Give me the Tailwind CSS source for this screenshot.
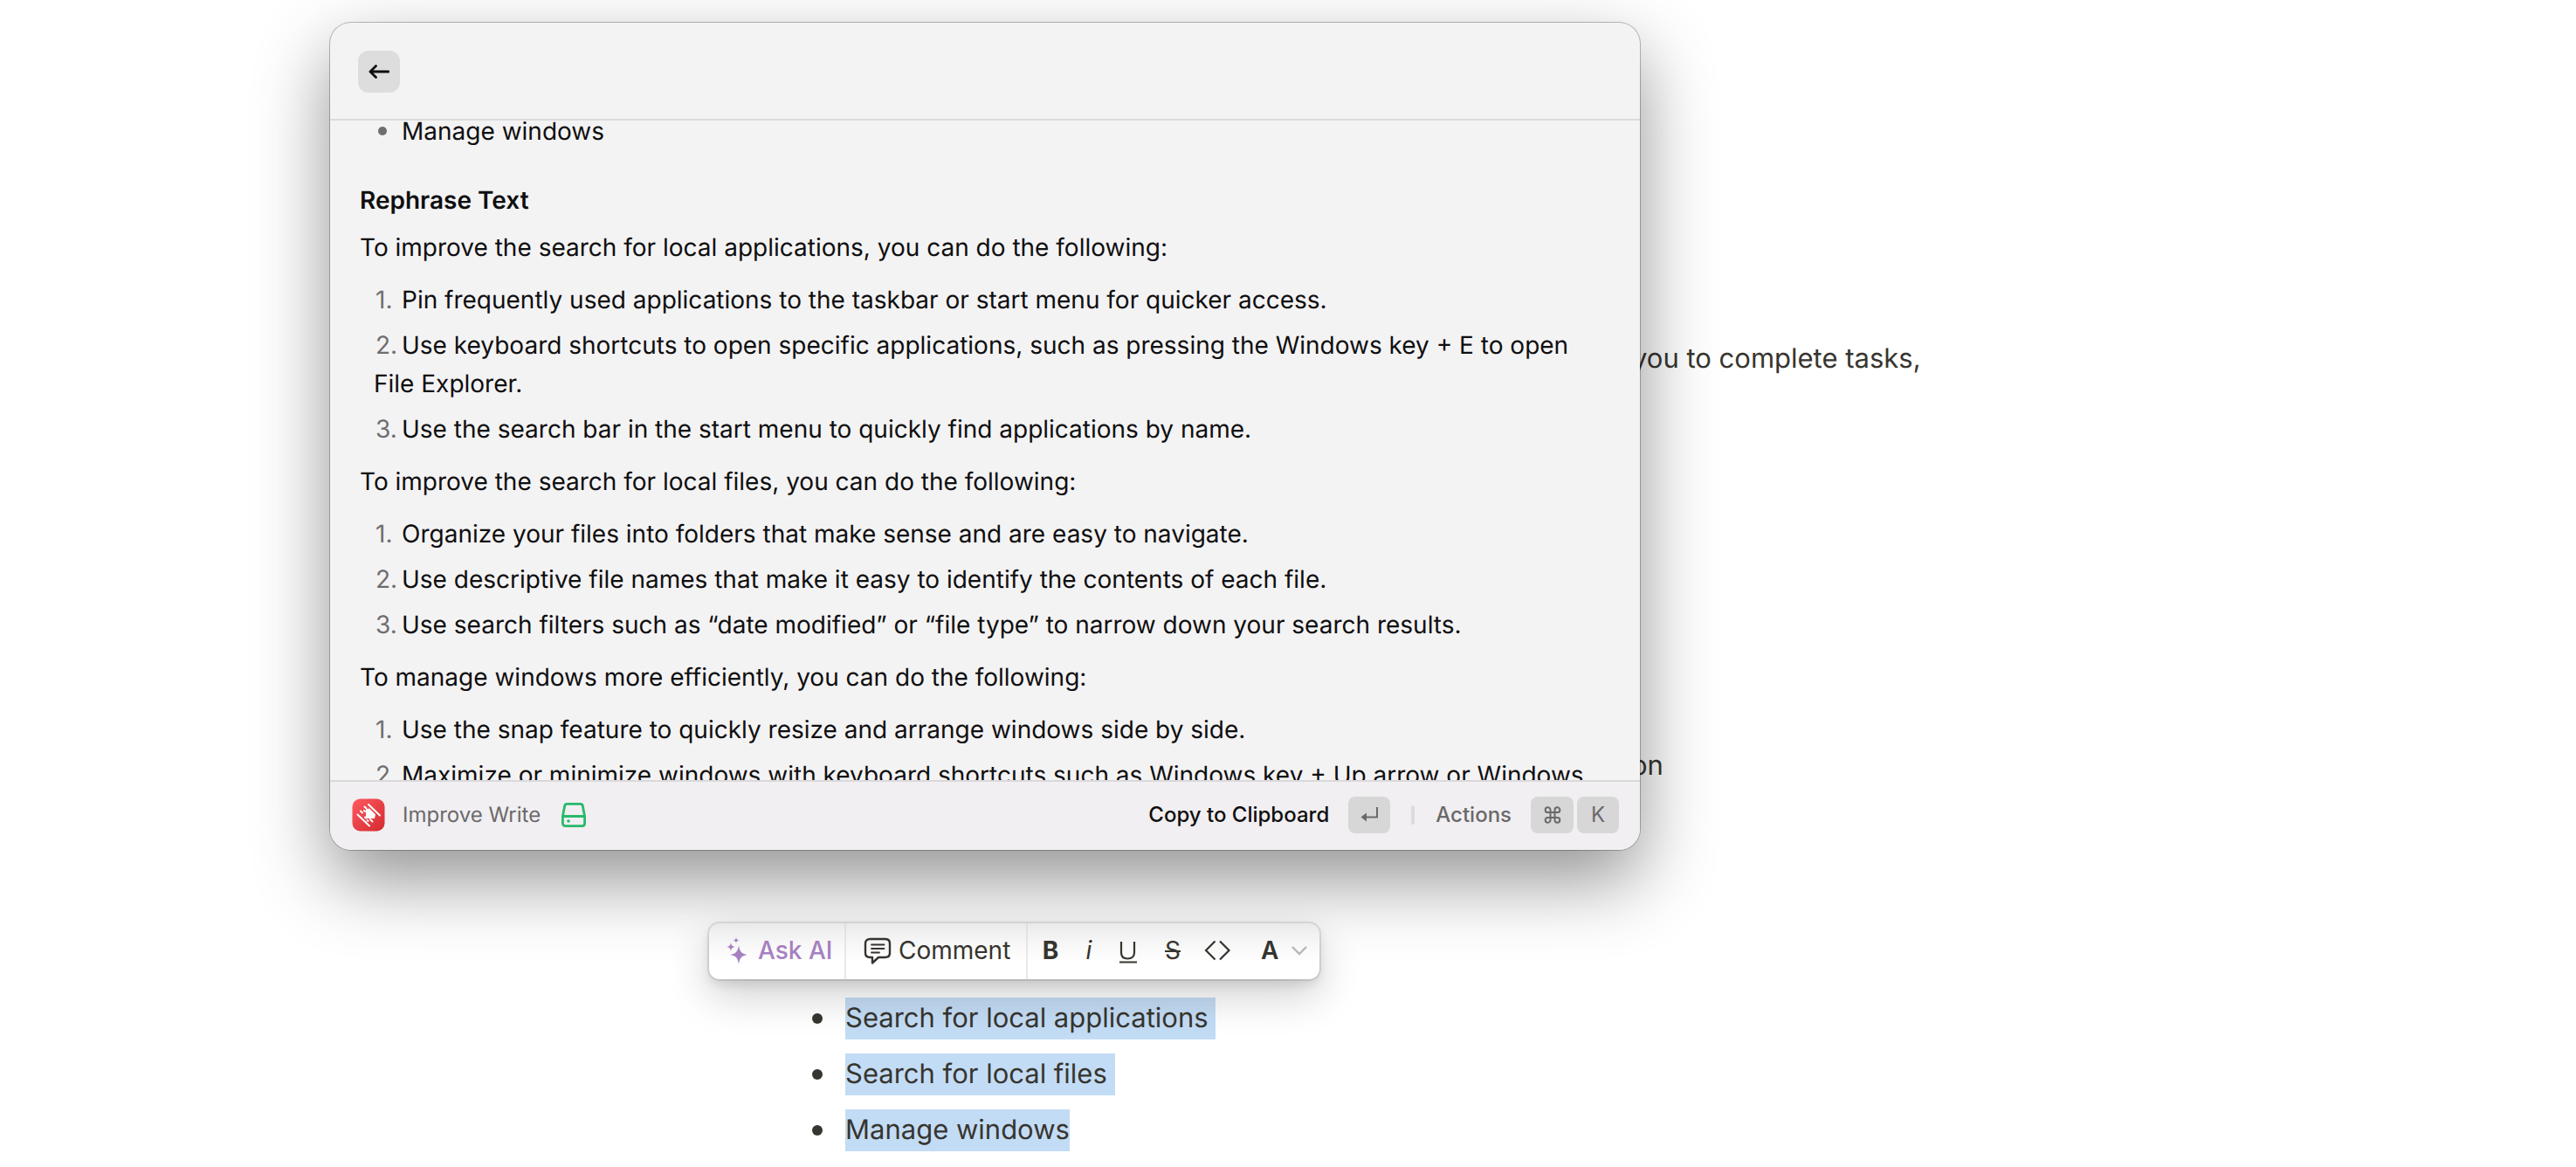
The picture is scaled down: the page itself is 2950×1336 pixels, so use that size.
<!DOCTYPE html>
<html lang="en">
<head>
<meta charset="utf-8">
<title>Improve Write</title>
<script src="https://cdn.jsdelivr.net/npm/@tailwindcss/browser@4"></script>
</head>
<body class="relative min-h-screen overflow-hidden bg-white font-[Inter,sans-serif] text-[#37352f] antialiased [text-rendering:geometricPrecision]">

<!-- Document -->
<main class="flex flex-col pt-[387px] text-[31px] leading-[48px]">
  <p class="pl-[1869px]">you to complete tasks,</p>
  <p class="mt-[418px] pl-[1868px]">on</p>
  <ul class="mt-[241px] flex flex-col gap-4 pl-[930px]">
    <li class="flex items-center gap-[26px]"><span class="size-3 rounded-full bg-[#37352f]"></span><span class="whitespace-pre bg-[#c3dcf5]">Search for local applications </span></li>
    <li class="flex items-center gap-[26px]"><span class="size-3 rounded-full bg-[#37352f]"></span><span class="whitespace-pre bg-[#c3dcf5]">Search for local files </span></li>
    <li class="flex items-center gap-[26px]"><span class="size-3 rounded-full bg-[#37352f]"></span><span class="bg-[#c3dcf5]">Manage windows</span></li>
  </ul>
</main>

<!-- Selection toolbar -->
<div role="toolbar" aria-label="Text formatting" class="absolute left-[812px] top-[1057px] flex h-16 items-stretch rounded-xl bg-white bg-linear-to-b from-[#f5f5f5] to-white to-70% text-[28px] shadow-[0_0_0_2px_rgba(15,15,15,0.09),0_6px_12px_rgba(15,15,15,0.1),0_18px_48px_rgba(15,15,15,0.2)]">
  <button class="flex w-[157px] items-center gap-3 border-r-2 border-[#e9e9e7] pb-0.5 pl-5 font-medium text-[#a782c3]">
    <svg class="h-8 w-6" viewBox="0 0 24 32" fill="currentColor"><path d="M14 10c1 7 3 10 10 11-7 1-9 4-10 11-1-7-3-10-10-11 7-1 9-4 10-11zM5 7c.6 3.400 1.500 4.400 5 5-3.500.6-4.400 1.600-5 5-.6-3.400-1.500-4.400-5-5 3.500-.6 4.400-1.600 5-5zM11 1c.4 2.300 1 3 3.500 3.500C12 5 11.400 5.700 11 8c-.4-2.300-1-3-3.500-3.500C10 4 10.600 3.300 11 1z"/></svg>
    Ask AI
  </button>
  <button class="flex w-[208px] items-center gap-2 border-r-2 border-[#e9e9e7] pb-0.5 pl-5">
    <svg class="h-8 w-8" viewBox="0 0 32 32" fill="none" stroke="currentColor" stroke-width="2.400" stroke-linejoin="round" stroke-linecap="round"><path d="M7.500 3h17c3.500 0 5.500 2 5.500 5v11c0 3-2 5-5.500 5H17l-7 6.500V24H7.500C4 24 2 22 2 19V8c0-3 2-5 5.500-5z"/><path stroke-width="1.800" d="M9 9.500h14.500M9 14h14.500M9 18.500h9"/></svg>
    Comment
  </button>
  <div class="flex items-center pb-0.5">
    <button aria-label="Bold" class="w-[52px] text-center font-bold">B</button>
    <button aria-label="Italic" class="w-9 text-center italic">i</button>
    <button aria-label="Underline" class="flex w-[54px] justify-center"><svg class="h-8 w-6" viewBox="0 0 24 32" fill="none" stroke="currentColor" stroke-width="2.200"><path d="M4 6v12.500c0 4.500 3 7 7.500 7s7.500-2.500 7.500-7V6M2 29.500h20"/></svg></button>
    <button aria-label="Strikethrough" class="w-12 text-center line-through decoration-2">S</button>
    <button aria-label="Code" class="flex w-[54px] justify-center"><svg class="h-8 w-8" viewBox="0 0 32 32" fill="none" stroke="currentColor" stroke-width="2.200"><path d="M13.500 5.500L3 16l10.500 10.500M19 5.500L29.500 16 19 26.500"/></svg></button>
    <button aria-label="Text color" class="flex w-[90px] items-center gap-3.5 pl-[23px] font-semibold">A<svg class="h-4 w-5" viewBox="0 0 20 16" fill="none" stroke="#b9b9b7" stroke-width="2.400"><path d="M2 4l8 8 8-8"/></svg></button>
  </div>
</div>

<!-- Floating window -->
<section aria-label="Improve Write" class="absolute left-[378px] top-[26px] flex h-[947px] w-[1500px] flex-col overflow-hidden rounded-3xl bg-[#f4f3f4] text-[28px] leading-[44px] text-[#0f0f10] shadow-[0_0_0_1px_rgba(0,0,0,0.25),0_34px_84px_rgba(0,0,0,0.43)]">
  <header class="flex h-28 shrink-0 items-center border-b-2 border-[#dcdbdc] px-8 pt-0.5">
    <button aria-label="Back" class="flex size-12 items-center justify-center rounded-xl bg-[#dddddd]">
      <svg class="size-6" viewBox="0 0 24 24" fill="none" stroke="currentColor" stroke-width="2.800" stroke-linecap="round" stroke-linejoin="round"><path d="M23 12H2M8.500 5.500L2 12l6.500 6.500"/></svg>
    </button>
  </header>

  <div class="min-h-0 grow overflow-hidden px-[34px] [font-optical-sizing:none]">
    <ul class="-mt-2.5">
      <li class="flex items-center gap-[17px] pl-[21px]"><span class="size-[10px] rounded-full bg-[#6f6e6f]"></span>Manage windows</li>
    </ul>
    <h2 class="mt-[35px] font-semibold">Rephrase Text</h2>
    <p class="mt-2.5">To improve the search for local applications, you can do the following:</p>
    <ol class="mt-4 flex flex-col gap-2 pl-4">
      <li><span class="inline-block w-8 pl-0.5 text-[#6f6e6f]">1.</span>Pin frequently used applications to the taskbar or start menu for quicker access.</li>
      <li><span class="inline-block w-8 pl-0.5 text-[#6f6e6f]">2.</span>Use keyboard shortcuts to open specific applications, such as pressing the Windows key + E to open File Explorer.</li>
      <li><span class="inline-block w-8 pl-0.5 text-[#6f6e6f]">3.</span>Use the search bar in the start menu to quickly find applications by name.</li>
    </ol>
    <p class="mt-4">To improve the search for local files, you can do the following:</p>
    <ol class="mt-4 flex flex-col gap-2 pl-4">
      <li><span class="inline-block w-8 pl-0.5 text-[#6f6e6f]">1.</span>Organize your files into folders that make sense and are easy to navigate.</li>
      <li><span class="inline-block w-8 pl-0.5 text-[#6f6e6f]">2.</span>Use descriptive file names that make it easy to identify the contents of each file.</li>
      <li><span class="inline-block w-8 pl-0.5 text-[#6f6e6f]">3.</span>Use search filters such as “date modified” or “file type” to narrow down your search results.</li>
    </ol>
    <p class="mt-4">To manage windows more efficiently, you can do the following:</p>
    <ol class="mt-4 flex flex-col gap-2 pl-4">
      <li><span class="inline-block w-8 pl-0.5 text-[#6f6e6f]">1.</span>Use the snap feature to quickly resize and arrange windows side by side.</li>
      <li><span class="inline-block w-8 pl-0.5 text-[#6f6e6f]">2.</span>Maximize or minimize windows with keyboard shortcuts such as Windows key + Up arrow or Windows</li>
    </ol>
  </div>

  <footer class="flex h-20 shrink-0 items-center border-t-2 border-[#dad8da] bg-[#f1eff1] pl-[25px] pr-6 pb-0.5 text-[24px] text-[#6a696a]">
    <svg class="size-[38px]" viewBox="0 0 38 38"><defs><linearGradient id="logo" x1="0" y1="0" x2="1" y2="1"><stop offset="0" stop-color="#fc5a5f"/><stop offset="1" stop-color="#d42a30"/></linearGradient></defs><rect x=".5" y=".5" width="37" height="37" rx="9" fill="url(#logo)"/><path fill="#fff" d="M16 12.500l4-1 7 7-1 4.500H16z"/><path stroke="#fff" stroke-width="2" stroke-linecap="round" fill="none" d="M19 7l13 12.500M14.500 9.500l2 2M6.500 18.500L20 31.500M10 14.500l2 2M15 21.500l1 1M14 14l1 1M21 24l2.500 2.500M17.500 25l1 1"/></svg>
    <span class="ml-5">Improve Write</span>
    <svg class="ml-6 size-7" viewBox="0 0 28 28" fill="none" stroke="#27b96b" stroke-width="2.800" stroke-linejoin="round"><path d="M6.500 1.400h15c1.500 0 2.500.8 2.800 2.200l2.300 11.900v8c0 2-1.200 3.100-3.100 3.100h-19c-1.900 0-3.100-1.100-3.100-3.100v-8L3.700 3.600c.3-1.400 1.300-2.200 2.800-2.200zM1.400 15.500h25.200"/><circle cx="8" cy="21" r="1.800" fill="#27b96b" stroke="none"/></svg>
    <button class="ml-auto flex items-center gap-[22px] font-medium text-[#0f0f10]">Copy to Clipboard
      <kbd class="flex h-[42px] w-12 items-center justify-center rounded-lg bg-[#d8d7d8] text-[#6a696a]"><svg class="size-6" viewBox="0 0 24 24" fill="none" stroke="currentColor" stroke-width="2"><path d="M21 3v11.500H5"/><path d="M9 9.500v10L2.500 14.500z" fill="currentColor" stroke="none"/></svg></kbd>
    </button>
    <span class="mx-6 h-[22px] w-1 rounded-sm bg-[#dddbdd]"></span>
    <button class="flex items-center gap-1 font-medium"><span class="mr-[18px]">Actions</span>
      <kbd class="flex h-[42px] w-[49px] items-center justify-center rounded-lg bg-[#d8d7d8]"><svg class="size-5" viewBox="0 0 24 24" fill="none" stroke="currentColor" stroke-width="2.400"><path d="M15 5v14a3.500 3.500 0 1 0 3.500-3.500h-13A3.500 3.500 0 1 0 9 19V5a3.500 3.500 0 1 0-3.500 3.500h13A3.500 3.500 0 1 0 15 5z"/></svg></kbd>
      <kbd class="flex h-[42px] w-12 items-center justify-center rounded-lg bg-[#d8d7d8] font-[Inter,sans-serif] font-normal">K</kbd>
    </button>
  </footer>
</section>
</body>
</html>
